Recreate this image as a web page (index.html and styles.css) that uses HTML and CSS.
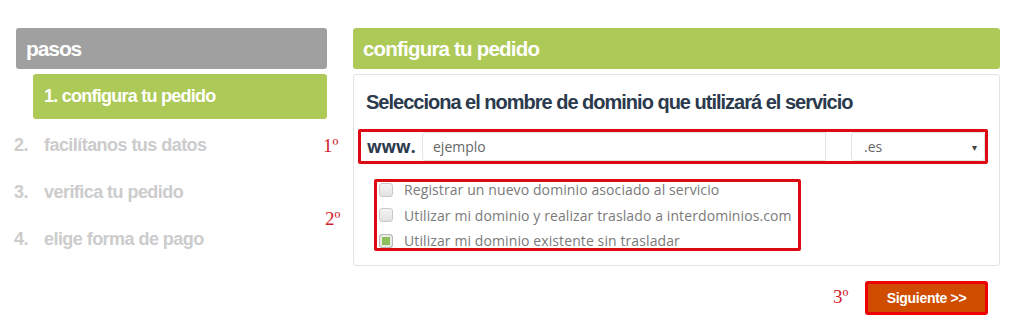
FILE: index.html
```html
<!DOCTYPE html>
<html lang="es">

<head>
    <meta charset="UTF-8">
    <meta name="viewport" content="width=device-width, initial-scale=1.0">
    <title>Configura tu pedido</title>

    <link rel="stylesheet" href="styles.css">
</head>

<body>
    <div class="page">
        <div class="steps">
            <div class="steps-title">pasos</div>
            <ul class="step-list">
                <li class="step active">1. configura tu pedido</li>
                <li class="step"><span class="num">2.</span>facilítanos tus datos</li>
                <li class="step"><span class="num">3.</span>verifica tu pedido</li>
                <li class="step"><span class="num">4.</span>elige forma de pago</li>
            </ul>
        </div>

        <div class="order">
            <div class="order-title">configura tu pedido</div>
            <div class="panel">
                <h2>Selecciona el nombre de dominio que utilizará el servicio</h2>

                <div class="mark mark-domain">
                    <span class="note note-1">1º</span>
                    <div class="domain-row">
                        <span class="www">www.</span>
                        <input type="text" class="domain-input" value="ejemplo">
                        <div class="tld">
                            <span>.es</span>
                            <span class="arrow">&#9662;</span>
                        </div>
                    </div>
                </div>

                <div class="mark mark-options">
                    <span class="note note-2">2º</span>
                    <div class="options">
                        <label class="option first"><span class="check"></span>Registrar un nuevo dominio asociado al servicio</label>
                        <label class="option"><span class="check"></span>Utilizar mi dominio y realizar traslado a interdominios.com</label>
                        <label class="option"><span class="check on"></span>Utilizar mi dominio existente sin trasladar</label>
                    </div>
                </div>
            </div>

            <div class="actions">
                <span class="note note-3">3º</span>
                <button class="next">Siguiente &gt;&gt;</button>
            </div>
        </div>
    </div>
</body>

</html>
```

FILE: styles.css
```css
body {
    margin: 0;
    background: #fff;
    font-family: 'Open Sans', sans-serif;
}

.page {
    display: flex;
    padding: 28px 24px 0 14px;
    gap: 26px;
}

/* left column */
.steps {
    width: 313px;
    flex-shrink: 0;
}

.steps-title {
    margin-left: 2px;
    height: 41px;
    line-height: 41px;
    padding-left: 10px;
    background-color: #a0a0a0;
    border-radius: 3px;
    color: #fff;
    font-family: 'Liberation Sans', Arial, sans-serif;
    font-weight: bold;
    font-size: 21px;
    letter-spacing: -1.1px;
}

.step-list {
    list-style: none;
    margin: 5px 0 0;
    padding: 0;
}

.step {
    font-family: 'Liberation Sans', Arial, sans-serif;
    font-weight: bold;
    font-size: 18px;
    letter-spacing: -0.55px;
    color: #cccccc;
    height: 47px;
    line-height: 47px;
    display: flex;
}

.step .num {
    width: 30px;
}

.step.active {
    margin-left: 19px;
    height: 45px;
    line-height: 45px;
    padding-left: 11px;
    background-color: #adc957;
    border-radius: 3px;
    color: #fff;
    margin-bottom: 3px;
    letter-spacing: -0.75px;
}

/* right column */
.order {
    flex: 1;
    position: relative;
}

.order-title {
    height: 41px;
    line-height: 41px;
    padding-left: 10px;
    background-color: #adc957;
    border-radius: 3px;
    color: #fff;
    font-family: 'Liberation Sans', Arial, sans-serif;
    font-weight: bold;
    font-size: 20.5px;
    letter-spacing: -0.8px;
}

.panel {
    margin-top: 5px;
    border: 1px solid #e3e3e3;
    border-radius: 3px;
    padding: 0 4px;
    box-sizing: border-box;
    height: 192px;
}

.panel h2 {
    margin: 14px 0 0 8px;
    font-family: 'Liberation Sans', Arial, sans-serif;
    font-weight: bold;
    font-size: 20px;
    letter-spacing: -1px;
    line-height: 26px;
    color: #2b3a4d;
}

.mark {
    border: 3px solid #dd0a12;
    border-radius: 2px;
    position: relative;
}

.note {
    position: absolute;
    font-family: 'Liberation Serif', serif;
    font-size: 19px;
    color: #d0202a;
}

.mark-domain {
    margin: 14px 7px 0 0;
}

.note-1 {
    left: -38px;
    top: 3px;
}

.domain-row {
    display: flex;
    align-items: center;
    height: 29px;
}

.www {
    width: 61px;
    padding-left: 6px;
    box-sizing: border-box;
    font-weight: bold;
    font-size: 17px;
    color: #2b3a4d;
}

.domain-input {
    width: 404px;
    height: 29px;
    box-sizing: border-box;
    border: 1px solid #e2e2e2;
    border-radius: 3px 0 0 3px;
    padding: 0 10px;
    font-family: 'Open Sans', sans-serif;
    font-size: 14px;
    color: #666;
    outline: none;
}

.tld {
    margin-left: 25px;
    flex: 1;
    height: 29px;
    box-sizing: border-box;
    border: 1px solid #e2e2e2;
    border-radius: 3px;
    display: flex;
    align-items: center;
    justify-content: space-between;
    padding: 0 7px 0 12px;
    font-size: 14px;
    color: #666;
}

.tld .arrow {
    font-size: 10px;
    color: #444;
}

.mark-options {
    margin: 15px 0 0 16px;
    width: 427px;
    height: 72px;
    box-sizing: border-box;
}

.note-2 {
    left: -52px;
    top: 26px;
}

/* top row sits slightly under the frame, as in the original capture */
.options {
    clip-path: inset(0 -20px -20px -20px);
}

.option {
    display: flex;
    align-items: center;
    height: 25.5px;
    padding-left: 2px;
    font-size: 14px;
    letter-spacing: 0.1px;
    color: #7a7a7a;
}

.option.first {
    margin-top: -5px;
}

.check {
    width: 12px;
    height: 12px;
    border: 1px solid #c9c9c9;
    border-radius: 3px;
    background: linear-gradient(#f4f4f4, #e2e2e2);
    margin-right: 11px;
}

.check.on {
    background: #8cc05a;
    border-color: #b8b8b8;
    box-shadow: inset 0 0 0 2px #eaeaea;
}

.actions {
    display: flex;
    justify-content: flex-end;
    padding: 15px 12px 0 0;
    position: relative;
}

.note-3 {
    left: 480px;
    top: 20px;
}

.next {
    width: 123px;
    height: 34px;
    border: 3px solid #ee0000;
    border-radius: 3px;
    background-color: #d04d00;
    color: #fff;
    font-family: 'Liberation Sans', Arial, sans-serif;
    font-weight: bold;
    font-size: 14px;
    letter-spacing: -0.3px;
    cursor: pointer;
}
```
